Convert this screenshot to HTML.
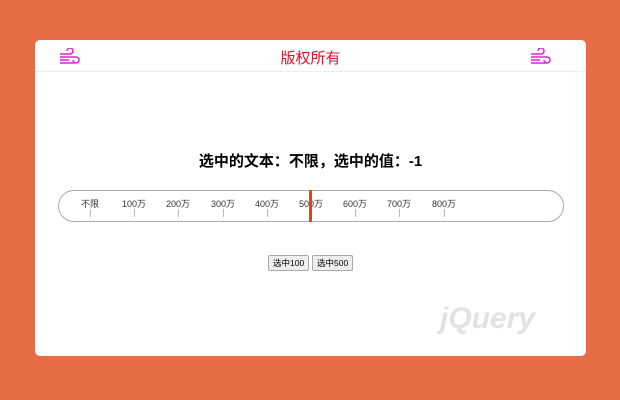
<!DOCTYPE html><html><head><meta charset="utf-8"><style>
body{margin:0;width:620px;height:400px;background:#e46d46;font-family:"Liberation Sans","Noto Sans CJK SC",sans-serif;position:relative;overflow:hidden}
.card{position:absolute;left:35px;top:40px;width:551px;height:316px;background:#fff;border-radius:5px}
.hd{position:absolute;left:0;top:0;width:100%;height:31px;border-bottom:1px solid #eee}
.ttl{position:absolute;left:0;width:100%;top:7px;text-align:center;color:#e0102a;font-size:15px}
.h2{position:absolute;left:0;width:100%;top:110px;text-align:center;font-size:15px;font-weight:bold;color:#000}
.pill{position:absolute;left:23px;top:150px;width:504px;height:30px;border:1px solid #aaa;border-radius:16px}
.lb{position:absolute;top:157px;font-size:9px;color:#333;transform:translateX(-50%)}
.tk{position:absolute;top:169px;width:1px;height:8px;background:#bbb}
.mk{position:absolute;left:274px;top:150px;width:3px;height:32px;background:#e8421a}
.btn{position:absolute;top:215px;height:14px;border:1px solid #aaa;background:#eee;font-size:8.5px;line-height:14px;padding:0 4px;border-radius:2px}
.wm{position:absolute;left:405px;top:262px;color:#e2e2e2;font-size:30px;font-style:italic;font-weight:bold}
</style></head><body><div class="card">
<div class="hd">
<svg style="position:absolute;left:24px;top:8px" width="22" height="18" viewBox="0 0 22 18" fill="none" stroke="#e020d0" stroke-width="1.5"><path d="M1 6h10a3 3 0 1 0-3-3M1 9h16a3 3 0 1 1-3 3M1 12h9M1 15h14"/></svg>
<svg style="position:absolute;left:495px;top:8px" width="22" height="18" viewBox="0 0 22 18" fill="none" stroke="#e020d0" stroke-width="1.5"><path d="M1 6h10a3 3 0 1 0-3-3M1 9h16a3 3 0 1 1-3 3M1 12h9M1 15h14"/></svg>
<div class="ttl">版权所有</div></div>
<div class="h2">选中的文本：不限，选中的值：-1</div>
<div class="pill"></div>
<div class="lb" style="left:55px">不限</div><div class="tk" style="left:55px"></div>
<div class="lb" style="left:99px">100万</div><div class="tk" style="left:99px"></div>
<div class="lb" style="left:143px">200万</div><div class="tk" style="left:143px"></div>
<div class="lb" style="left:188px">300万</div><div class="tk" style="left:188px"></div>
<div class="lb" style="left:232px">400万</div><div class="tk" style="left:232px"></div>
<div class="lb" style="left:276px">500万</div><div class="tk" style="left:276px"></div>
<div class="lb" style="left:320px">600万</div><div class="tk" style="left:320px"></div>
<div class="lb" style="left:364px">700万</div><div class="tk" style="left:364px"></div>
<div class="lb" style="left:409px">800万</div><div class="tk" style="left:409px"></div>
<div class="mk"></div>
<div class="btn" style="left:233px">选中100</div>
<div class="btn" style="left:277px">选中500</div>
<div class="wm">jQuery</div>
</div></body></html>
